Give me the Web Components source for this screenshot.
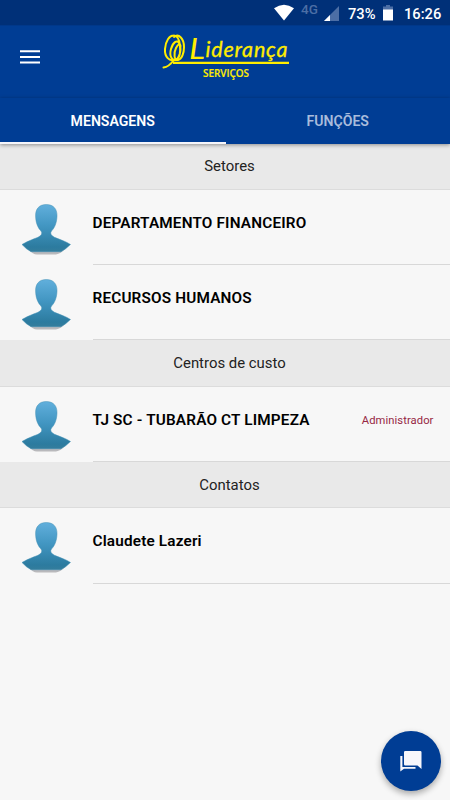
<!DOCTYPE html>
<html lang="pt-BR">
<head>
<meta charset="utf-8">
<meta name="viewport" content="width=device-width">
<title>Liderança Serviços</title>
<style>
html,body{margin:0;height:100%;overflow:hidden;background:#f7f7f7;font-family:Roboto,"Noto Sans",sans-serif}
</style>
</head>
<body>
<message-app></message-app>
<script>
const define = (name, markup) => {
  const template = document.createElement('template');
  template.innerHTML = markup;
  customElements.define(name, class extends HTMLElement {
    constructor() {
      super();
      this.attachShadow({mode: 'open'}).append(template.content.cloneNode(true));
    }
  });
};

define('status-bar', `
<style>
:host{display:flex;height:25px;background:#003078;color:#fff;font-size:14.7px;font-weight:500;line-height:28px;justify-content:flex-end;box-sizing:border-box;padding-right:8px}
svg{display:block;flex:none}
.net{color:#4c6ea5;font-size:13.5px;line-height:19px;margin-left:7px;width:18px}
.pct{margin-left:8px;width:28px;white-space:nowrap}
.time{width:38px;white-space:nowrap;margin-left:10px}
</style>
<svg width="20" height="25" viewBox="0 0 20 25"><path d="M0 8.2Q10 1.2 20 8.2L10 20.5Z" fill="#fff"/></svg>
<span class="net">4G</span>
<svg width="16" height="25" viewBox="0 0 16 25" style="margin-left:5px"><path d="M15 6V21H0Z" fill="#4c6ea5"/><path d="M6 15V21H0Z" fill="#fff"/></svg>
<span class="pct">73%</span>
<svg width="12" height="25" viewBox="0 0 12 25" style="margin-left:6px"><path d="M1 10V6.4H4V5H8V6.4H11V10Z" fill="#4c6ea5"/><path d="M1 9.5H11V20.5H1Z" fill="#fff"/></svg>
<span class="time">16:26</span>`);

define('brand-logo', `
<style>:host{display:block}svg{display:block}</style>
<svg width="130" height="58" viewBox="0 -8 130 58" fill="none" stroke="#ffed00">
<g stroke-width="2" stroke-linecap="round">
<path d="M14 26C7 30 2.5 23 3 16C3.5 8 7.5 2.5 11.5 2.5C19 2 20 22 15 26.5C10 29 7 23 9 16C11 9 15 6.5 17 10C20 15 18 24 14 27"/>
<path d="M12 4C17 0 22 6 22 14C22 20 20 26 16 27C12 28 11.5 20 14 15C16 11 18 10 18.5 13"/>
<path d="M1.5 34.5C6 34 9 31 12 27"/>
</g>
<path d="M11 29.8H127" stroke-width="2.2"/>
<g fill="#ffed00" font-family="Lato,sans-serif">
<text x="27" y="26" font-size="28" font-style="italic" stroke="none" textLength="16" lengthAdjust="spacingAndGlyphs">L</text>
<text x="43.5" y="23.5" font-size="21.5" font-style="italic" stroke-width=".3" textLength="82" lengthAdjust="spacing">iderança</text>
<text x="41" y="44.3" font-family="Open Sans,sans-serif" font-size="9.8" font-weight="600" stroke-width=".15" textLength="46" lengthAdjust="spacingAndGlyphs">SERVIÇOS</text>
</g>
</svg>`);

define('app-bar', `
<style>
:host{display:grid;grid-template-columns:162px 1fr;height:73px;background:#003d94;box-shadow:inset 0 1px #00388a}
.menu{display:block;margin:25px 0 0 20px}
</style>
<svg class="menu" width="20" height="14" viewBox="0 0 20 14"><path d="M0 1.3H20M0 7H20M0 12.5H20" stroke="#fff" stroke-width="2.1"/></svg>
<brand-logo></brand-logo>`);

define('tab-bar', `
<style>
:host{display:grid;grid-template-columns:225.5px 1fr;height:46px;background:#003d94;box-shadow:0 1px 4px rgba(0,0,0,.4);position:relative}
::slotted(*){display:block;text-align:center;font-size:14.1px;font-weight:600;line-height:46px;color:#a9bcdc}
::slotted([active]){color:#fff;box-shadow:inset 0 -2px #f5f5fa}
</style><slot></slot>`);

define('section-header', `
<style>
:host{display:block;box-sizing:border-box;height:46.5px;background:#e9e9e9;border-bottom:1px solid #dcdcdc;text-align:center;font-size:14.9px;line-height:46px;color:#222;padding-left:9px}
</style><slot></slot>`);

define('person-avatar', `
<style>:host{display:block}svg{display:block}</style>
<svg width="50" height="54" viewBox="0 0 50 54">
<defs><linearGradient id="g" x2="0" y2="1"><stop stop-color="#61afdc"/><stop offset=".45" stop-color="#4296c2"/><stop offset=".9" stop-color="#2c7b9f"/><stop offset="1" stop-color="#347d9c"/></linearGradient></defs>
<path d="M7 46Q12 51.5 16 51.5H35Q40 50.5 44 46Z" fill="#b9b9bc"/>
<path d="M25.3 1.5C18 1.5 14.4 6 14.6 13C14.7 20 17 25 20 28Q22.5 31.5 17 34.3C10 37 6 38.5 1 41.5Q5 46 10 48.7H40Q45 46 49.5 41.5C45 38.5 40 37 33.5 34.3Q28 31.5 30.5 28C33.5 25 35.8 20 36 13C36.2 6 32.5 1.5 25.3 1.5Z" fill="url(#g)" stroke="#4390b5" stroke-width=".5"/>
</svg>`);

define('contact-row', `
<style>
:host{display:grid;grid-template-columns:92.5px 1fr;height:75.2px}
person-avatar{margin:13px 0 0 21px}
.body{display:flex;justify-content:space-between;border-bottom:1px solid #d8d8d8;box-sizing:border-box;padding-right:16.5px;line-height:67.4px;font-size:15.3px;font-weight:600;color:#000;white-space:nowrap}
.name{letter-spacing:.18px}
::slotted([slot=role]){font-size:11.2px;font-weight:400;color:#962744;letter-spacing:.08px}
</style>
<person-avatar></person-avatar>
<div class="body"><span class="name"><slot></slot></span><slot name="role"></slot></div>`);

define('chat-button', `
<style>
:host{display:grid;place-items:center;width:60px;height:60px;border-radius:50%;background:#003d94;box-shadow:0 3px 6px rgba(0,0,0,.32)}
svg{display:block}
</style>
<svg width="22" height="22" viewBox="0 0 22 22" fill="#f7f7fb"><path d="M5.2 1H20.3Q21.5 1 21.5 2.2V19L17.5 15.5H5.2Q4 15.5 4 14.3V2.2Q4 1 5.2 1Z"/><path d="M0.3 6H2.4V17H15.5V18.7H4L.3 21.5Z"/></svg>`);

define('message-app', `
<style>
:host{display:flex;flex-direction:column;width:450px;height:800px;background:#f7f7f7;position:relative;overflow:hidden}
:host>*{flex:none}
.first{height:45.5px;line-height:44px}
.centers{height:46.9px}
chat-button{position:absolute;right:9.5px;bottom:9px}
</style>
<status-bar></status-bar>
<app-bar></app-bar>
<tab-bar><span active>MENSAGENS</span><span>FUNÇÕES</span></tab-bar>
<section-header class="first">Setores</section-header>
<contact-row>DEPARTAMENTO FINANCEIRO</contact-row>
<contact-row>RECURSOS HUMANOS</contact-row>
<section-header class="centers">Centros de custo</section-header>
<contact-row>TJ SC - TUBARÃO CT LIMPEZA<span slot="role">Administrador</span></contact-row>
<section-header>Contatos</section-header>
<contact-row>Claudete Lazeri</contact-row>
<chat-button></chat-button>`);
</script>
</body>
</html>
